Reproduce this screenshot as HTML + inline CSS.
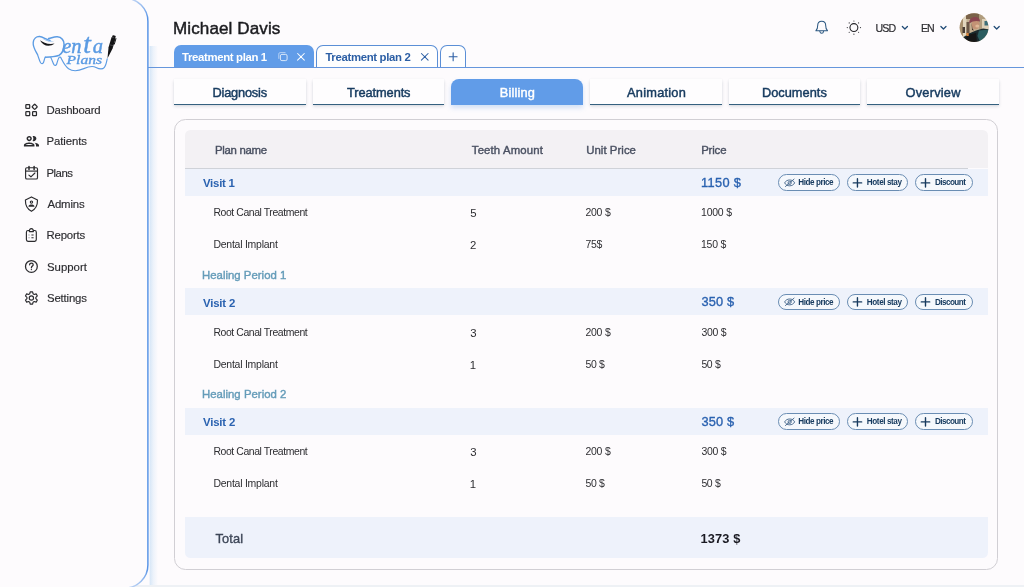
<!DOCTYPE html>
<html lang="en">
<head>
<meta charset="utf-8">
<title>Michael Davis – Billing</title>
<style>
*{box-sizing:border-box;margin:0;padding:0}
html,body{width:1024px;height:587px;overflow:hidden}
html{opacity:.999}
body{position:relative;background:#fdfbfd;font-family:"Liberation Sans",sans-serif;color:#333}
.t{position:absolute;white-space:nowrap;line-height:1;font-weight:400;display:block}
ul{list-style:none}
svg{position:absolute;overflow:visible}
.sidebar{position:absolute;left:0;top:-1px;width:148.6px;height:589px;background:#fdfbfd;border-radius:0 23px 23px 0;z-index:3}
.sideshadow{position:absolute;left:148.8px;top:45.5px;width:9.5px;height:545px;background:linear-gradient(to right,rgba(216,231,247,0) 0,rgba(216,231,247,.95) 14%,rgba(226,237,249,.6) 48%,rgba(240,244,252,0) 100%);z-index:1}
.bottomstrip{position:absolute;left:0;top:585.4px;width:1024px;height:2px;background:#eef1f5;z-index:2}
.header{position:absolute;left:0;top:0;width:1024px;height:45px}
.planline{position:absolute;left:148px;top:67.3px;width:876px;height:1px;background:#6696dc;z-index:3}
.ptab{position:absolute;top:45.4px;height:22.9px;border-radius:7px 7px 0 0;z-index:2}
.ptab.on{background:#619ce8}
.ptab.off{background:#fefefe;border:1px solid #5b8fd6;border-bottom:none}
.stab{position:absolute;top:79.3px;height:25.4px;width:131.8px;background:#fefdfe;border-bottom:1.3px solid #35607f;box-shadow:0 1.5px 3px rgba(40,60,90,.16),0 0 2px rgba(40,60,90,.06)}
.stab.on{background:#619ce8;border-bottom:none;border-radius:8px 8px 0 0;box-shadow:0 3px 5px rgba(94,153,228,.28)}
.card{position:absolute;left:174px;top:118.8px;width:824.3px;height:451px;border:1px solid #d1cfd4;border-radius:11.5px;background:#fdfbfd}
.thead{position:absolute;left:185px;top:130px;width:803px;height:38.3px;background:#f3f1f4;border-radius:5.5px 5.5px 0 0}
.theadline{position:absolute;left:185px;top:167.8px;width:783px;height:1px;background:#cfd2d8}
.vrow{position:absolute;left:185px;width:803px;height:27.3px;background:#eef2fb}
.total{position:absolute;left:185px;top:517.2px;width:803px;height:41.3px;background:#eef2fb;border-radius:0 0 5.5px 5.5px}
.pill{position:absolute;height:16.4px;border:1px solid #6a8db3;border-radius:9px;background:#f5f8fc}
</style>
</head>
<body>

<div class="sideshadow"></div>
<aside class="sidebar">
<svg style="left:0;top:0" width="150" height="589" viewBox="0 -1 150 589" fill="none"><defs><linearGradient id="sbg" gradientUnits="userSpaceOnUse" x1="0" y1="-2" x2="0" y2="589"><stop offset="0" stop-color="#5592e6" stop-opacity=".35"/><stop offset=".035" stop-color="#5592e6"/><stop offset=".965" stop-color="#5592e6"/><stop offset="1" stop-color="#5592e6" stop-opacity=".35"/></linearGradient></defs><path d="M124.900 -1.700 A23 23 0 0 1 147.900 21.300 V565 A23 23 0 0 1 124.900 588" stroke="url(#sbg)" stroke-width="1.450"/></svg>
<svg style="left:30px;top:33px;" width="90" height="44" viewBox="30 32 90 44" fill="none"><path d="M37.500 54.500 C35.600 51 32.800 47 33.200 42.600 C33.600 38.600 36.400 36.300 39.600 36.500 C43 36.700 46 39.600 50 40.300" stroke="#5b9be3" stroke-width="1.350" stroke-linecap="round"/><path d="M48.600 38.500 C51.200 38.300 53.600 36.600 57.300 36.800 C61.500 37 64.300 40.500 64.100 44.600 C63.800 49.600 62 53.400 59.300 55.200 C55.600 57.400 49.500 56.600 45.400 57.200" stroke="#5b9be3" stroke-width="1.550" stroke-linecap="round"/><path d="M37.500 54.500 C38.600 57.500 39.500 61 40.600 62.800 C41.400 64 42.900 64 43.500 62.500 C44.300 60.500 44.300 58.600 45.400 57.200 M50.800 57.400 C52.200 60 53.100 63.600 54.100 64.900 C54.900 65.800 56.100 65.600 56.600 64.200 C57.400 62 57.700 59.600 58.900 57.700 C59.500 56.800 60.400 56.800 61 57.900 C62.600 61 64.500 65.600 68.600 68.700 C73 71.800 78.800 70.800 83.800 68.600 C88.400 66.600 92.600 65.600 96 67.400 C99 69 102 70 104.200 67.600 C106.200 65.400 106.600 61.500 107.200 58.800" stroke="#5b9be3" stroke-width="1.150" stroke-linecap="round" stroke-linejoin="round"/><path d="M42.500 38.400 C45.500 39.600 49 41.600 55.300 40.800 C50 42.600 46 41 42.500 38.400Z" fill="#5b9be3" fill-opacity=".85"/><path d="M40 40.300 C43 42.600 48.500 45 54.600 43.600 C49.500 47.600 42.600 46 40 40.300Z" fill="#17171a"/><g transform="rotate(16.500 111 46.500)"><path d="M108.900 37.300 h4.200 v10.700 l-2.100 11 l-2.100 -11 z" fill="#141416"/><rect x="109.300" y="35" width="3.400" height="2.400" rx=".8" fill="#141416"/><path d="M113.500 37.200 v6.500" stroke="#141416" stroke-width=".9"/><path d="M108.900 45.200 h4.200" stroke="#6a6a70" stroke-width=".5"/></g><text x="62.600" y="52.800" font-family="'Liberation Serif',serif" font-style="italic" font-weight="400" font-size="20.500" fill="#5b9be3" stroke="#5b9be3" stroke-width=".45"><tspan x="62.300">e</tspan><tspan x="71.300">n</tspan><tspan x="83.200" font-size="27.500">t</tspan><tspan x="92.800">a</tspan></text><text x="66.600" y="64" font-family="'Liberation Serif',serif" font-style="italic" font-weight="400" font-size="12" fill="#5b9be3" stroke="#5b9be3" stroke-width=".35" textLength="35.500" lengthAdjust="spacingAndGlyphs">Plans</text></svg>
<nav><ul>
<li><svg style="left:22px;top:101px;" width="20" height="20" viewBox="22 100 20 20" fill="none"><rect x="25.85" y="104.6" width="3.85" height="3.85" rx=".6" stroke="#2b2b2e" stroke-width="1.25"/><rect x="25.85" y="111.65" width="3.85" height="3.85" rx=".6" stroke="#2b2b2e" stroke-width="1.25"/><rect x="32.6" y="111.65" width="3.85" height="3.85" rx=".6" stroke="#2b2b2e" stroke-width="1.25"/><rect x="32.75" y="104.85" width="3.85" height="3.85" rx=".6" transform="rotate(45 34.68 106.78)" stroke="#2b2b2e" stroke-width="1.25"/></svg><a class="t" style="left:46.59px;top:106.16px;font-size:11.38px;letter-spacing:-0.206px;color:#2c2c30;-webkit-text-stroke:0.15px #2c2c30;">Dashboard</a></li>
<li><svg style="left:22px;top:131px;" width="20" height="20" viewBox="22 130 20 20" fill="none"><g transform="translate(22.4 132.2) scale(.755)"><path d="M9 13.75c-2.34 0-7 1.17-7 3.5V19h14v-1.75c0-2.33-4.66-3.5-7-3.5zM4.34 17c.84-.58 2.87-1.25 4.66-1.25s3.82.67 4.66 1.25H4.34zM9 12c1.93 0 3.5-1.57 3.5-3.5S10.93 5 9 5 5.5 6.57 5.5 8.5 7.07 12 9 12zm0-5c.83 0 1.5.67 1.5 1.5S9.83 10 9 10s-1.500-.67-1.500-1.500S8.170 7 9 7zm7.040 6.810c1.160.84 1.960 1.960 1.960 3.440V19h4v-1.750c0-2.020-3.500-3.170-5.960-3.440zM15 12c1.930 0 3.500-1.570 3.500-3.500S16.930 5 15 5c-.540 0-1.040.130-1.500.350.630.890 1 1.980 1 3.150s-.370 2.260-1 3.150c.460.220.960.350 1.500.350z" fill="#2b2b2e"/></g></svg><a class="t" style="left:46.59px;top:137.41px;font-size:11.38px;letter-spacing:-0.106px;color:#2c2c30;-webkit-text-stroke:0.15px #2c2c30;">Patients</a></li>
<li><svg style="left:22px;top:164px;" width="20" height="20" viewBox="22 163 20 20" fill="none"><rect x="25.6" y="167.7" width="11.9" height="11.3" rx="1.3" stroke="#2b2b2e" stroke-width="1.15"/><path d="M25.6 171.1h11.9" stroke="#2b2b2e" stroke-width="1.15"/><path d="M29 166.4v3M34.1 166.4v3" stroke="#2b2b2e" stroke-width="1.5" stroke-linecap="round"/><path d="M28.9 175.1l2 1.7 4-3.8" stroke="#2b2b2e" stroke-width="1.15" stroke-linecap="round" stroke-linejoin="round"/></svg><a class="t" style="left:46.59px;top:168.81px;font-size:11.38px;letter-spacing:-0.541px;color:#2c2c30;-webkit-text-stroke:0.15px #2c2c30;">Plans</a></li>
<li><svg style="left:22px;top:195px;" width="20" height="20" viewBox="22 194 20 20" fill="none"><path d="M31.45 196.9 L37.5 200.1 C37.6 205.6 35.6 209.2 31.45 211.3 C27.3 209.2 25.3 205.6 25.4 200.1 Z" stroke="#2b2b2e" stroke-width="1.15" stroke-linejoin="round"/><circle cx="31.45" cy="202.1" r="1.15" stroke="#2b2b2e" stroke-width="1.15"/><path d="M28.4 206.7 C28.6 204.9 30 204.6 31.45 204.6 C32.9 204.6 34.3 204.9 34.500 206.700 Z" fill="#2b2b2e"/></svg><a class="t" style="left:47.50px;top:200.01px;font-size:11.38px;letter-spacing:-0.148px;color:#2c2c30;-webkit-text-stroke:0.15px #2c2c30;">Admins</a></li>
<li><svg style="left:22px;top:226px;" width="20" height="20" viewBox="22 225 20 20" fill="none"><path d="M29.4 230.5 H28 C27 230.5 26.4 231.200 26.4 232.200 V239.600 C26.4 240.600 27 241.300 28 241.300 H34.700 C35.700 241.300 36.300 240.600 36.300 239.600 V232.200 C36.300 231.200 35.700 230.500 34.700 230.500 H33.300" stroke="#2b2b2e" stroke-width="1.15"/><path d="M29.3 231.600 C29.300 229.600 30.200 228.600 31.350 228.600 C32.500 228.600 33.400 229.600 33.400 231.600 Z" stroke="#2b2b2e" stroke-width="1.15" stroke-linejoin="round"/><path d="M28.500 235h1.1M28.500 237.700h1.100" stroke="#8a8a8e" stroke-width="1.100"/><path d="M31.400 235h2.200M31.400 237.700h2.200" stroke="#2b2b2e" stroke-width="1.100"/></svg><a class="t" style="left:46.59px;top:231.41px;font-size:11.38px;letter-spacing:-0.209px;color:#2c2c30;-webkit-text-stroke:0.15px #2c2c30;">Reports</a></li>
<li><svg style="left:22px;top:258px;" width="20" height="20" viewBox="22 257 20 20" fill="none"><circle cx="31.400" cy="266.450" r="5.900" stroke="#2b2b2e" stroke-width="1.25"/><path d="M29.600 264.800 C29.600 263.600 30.400 263 31.400 263 C32.400 263 33.200 263.700 33.200 264.700 C33.200 266 31.400 266.200 31.400 267.800" stroke="#2b2b2e" stroke-width="1.25" stroke-linecap="round"/><circle cx="31.400" cy="269.600" r=".7" fill="#2b2b2e"/></svg><a class="t" style="left:46.99px;top:262.66px;font-size:11.38px;letter-spacing:0.009px;color:#2c2c30;-webkit-text-stroke:0.15px #2c2c30;">Support</a></li>
<li><svg style="left:22px;top:289px;" width="20" height="20" viewBox="22 288 20 20" fill="none"><path d="M30.20 291.82 L32.60 291.82 L33.09 293.83 L34.17 294.45 L36.15 293.87 L37.36 295.95 L35.86 297.37 L35.86 298.63 L37.36 300.05 L36.15 302.13 L34.17 301.55 L33.09 302.17 L32.60 304.18 L30.20 304.18 L29.71 302.17 L28.63 301.55 L26.65 302.13 L25.44 300.05 L26.94 298.63 L26.94 297.37 L25.44 295.95 L26.65 293.87 L28.63 294.45 L29.71 293.83Z" stroke="#2b2b2e" stroke-width="1.150" stroke-linejoin="round"/><circle cx="31.4" cy="298.0" r="2.150" stroke="#2b2b2e" stroke-width="1.150"/></svg><a class="t" style="left:46.99px;top:293.91px;font-size:11.38px;letter-spacing:-0.171px;color:#2c2c30;-webkit-text-stroke:0.15px #2c2c30;">Settings</a></li>
</ul></nav>
</aside>
<header class="header">
<h1 class="t" style="left:173.03px;top:19.86px;font-size:17.07px;letter-spacing:0.092px;color:#1b1b1f;-webkit-text-stroke:0.45px #1b1b1f;">Michael Davis</h1>
<svg style="left:808px;top:10px;" width="200" height="36" viewBox="808 10 200 36" fill="none"><path d="M815.900 30.700 C817.500 29.500 817.700 27.600 817.700 25.500 C817.700 22.900 819.400 21.200 821.700 21.200 C824 21.200 825.700 22.900 825.700 25.500 C825.700 27.600 825.900 29.500 827.500 30.700 Z" stroke="#2b5781" stroke-width="1.050" stroke-linejoin="round"/><path d="M819.800 31.200 C820 32.600 820.800 33.300 821.700 33.300 C822.600 33.300 823.400 32.600 823.600 31.200" stroke="#2b5781" stroke-width="1.050" stroke-linecap="round"/><circle cx="853.9" cy="27.6" r="3.950" stroke="#222226" stroke-width="1.100"/><circle cx="860.50" cy="27.60" r=".6" fill="#333338"/><circle cx="858.57" cy="32.27" r=".6" fill="#333338"/><circle cx="853.90" cy="34.20" r=".6" fill="#333338"/><circle cx="849.23" cy="32.27" r=".6" fill="#333338"/><circle cx="847.30" cy="27.60" r=".6" fill="#333338"/><circle cx="849.23" cy="22.93" r=".6" fill="#333338"/><circle cx="853.90" cy="21.00" r=".6" fill="#333338"/><circle cx="858.57" cy="22.93" r=".6" fill="#333338"/><path d="M902.35 26.500 L904.9 29 L907.4499999999999 26.500" stroke="#1f4a75" stroke-width="1.250" stroke-linecap="round" stroke-linejoin="round"/><path d="M940.9000000000001 26.500 L943.45 29 L946.0 26.500" stroke="#1f4a75" stroke-width="1.250" stroke-linecap="round" stroke-linejoin="round"/><path d="M994.1500000000001 26.500 L996.7 29 L999.25 26.500" stroke="#1f4a75" stroke-width="1.250" stroke-linecap="round" stroke-linejoin="round"/><defs><clipPath id="av"><circle cx="974.1" cy="27.600" r="14.400"/></clipPath><filter id="bl" x="-20%" y="-20%" width="140%" height="140%"><feGaussianBlur stdDeviation=".75"/></filter></defs>
<g clip-path="url(#av)"><rect x="958" y="12" width="33" height="32" fill="#c2ae90"/><g filter="url(#bl)">
<rect x="958" y="12" width="6" height="32" fill="#a8906e"/><rect x="963" y="15" width="3.500" height="22" fill="#e2d6be"/><rect x="962.500" y="27" width="2.500" height="6" fill="#4a3c34"/><rect x="966.500" y="22" width="3" height="12" fill="#6a5646"/>
<rect x="966" y="12" width="16" height="7" fill="#7a6248"/><rect x="979" y="14" width="10" height="18" fill="#b09c7e"/><rect x="982" y="19" width="7" height="13" fill="#ddd0b8"/><rect x="984.500" y="21" width="4" height="4.500" fill="#3d6e78"/>
<path d="M958 44 L962 38 L969 33.500 L976 30.500 L983 28.500 L990 29.500 L990 44 Z" fill="#1a2a2e"/><path d="M979 30.500 L989 29.500 L990 41 L981 44 L977.500 36Z" fill="#2b5c5e"/><path d="M960 44 L968 35 L976 33 L977 44Z" fill="#141517"/>
<ellipse cx="975.600" cy="24.600" rx="3.900" ry="4.700" fill="#c39274"/><path d="M969.300 23.500 C968.800 18.600 972.500 16.400 976 17 C979 17.600 980.300 19.800 979.900 21.600 C976.500 20.400 972.800 21 969.300 23.500Z" fill="#8a4450"/><ellipse cx="977.300" cy="26" rx="2" ry="1.600" fill="#e0b898"/><path d="M971.500 22.500 L972.500 28.500 L974 30.500 L972 30 Z" fill="#4a3228"/>
<rect x="966.300" y="33" width="2.400" height="3" fill="#d8843c"/></g></g></svg>
<span class="t" style="left:875.60px;top:22.70px;font-size:10.61px;letter-spacing:-0.886px;color:#2e2e32;-webkit-text-stroke:0.2px #2e2e32;">USD</span>
<span class="t" style="left:921.05px;top:22.70px;font-size:10.61px;letter-spacing:-1.231px;color:#2e2e32;-webkit-text-stroke:0.2px #2e2e32;">EN</span>
</header>
<div class="planline"></div>
<div class="ptab on" style="left:173.6px;width:140.2px"></div>
<span class="t" style="left:182.09px;top:52.11px;font-size:11.38px;letter-spacing:-0.353px;color:#fff;font-weight:700;z-index:3;">Treatment plan 1</span>
<div class="ptab off" style="left:316px;width:121.8px"></div>
<span class="t" style="left:325.39px;top:52.11px;font-size:11.38px;letter-spacing:-0.330px;color:#2c5fa5;font-weight:700;z-index:3;">Treatment plan 2</span>
<div class="ptab off" style="left:440.2px;width:25.8px"></div>
<svg style="left:270px;top:46px;z-index:4;" width="200" height="20" viewBox="270 46 200 20" fill="none"><rect x="280.400" y="54.400" width="6.700" height="6.200" rx="1.500" stroke="#fff" stroke-opacity=".85" stroke-width=".9"/><path d="M285.500 52.600 H280.300 C279.300 52.600 278.800 53.200 278.800 54.200 V58.800" stroke="#fff" stroke-opacity=".6" stroke-width=".9"/><path d="M297.600 53.500 L304.300 60.200 M304.300 53.500 L297.600 60.200" stroke="#fff" stroke-width="1.050" stroke-linecap="round"/><path d="M421.400 53.500 L428.100 60.200 M428.100 53.500 L421.400 60.200" stroke="#2c5fa5" stroke-width="1.050" stroke-linecap="round"/><path d="M449.200 56.800 H457.100 M453.150 52.850 V60.750" stroke="#2c5fa5" stroke-width="1.100" stroke-linecap="round"/></svg>
<div class="stab" style="left:174.00px"></div>
<span class="t" style="left:212.48px;top:86.60px;font-size:12.8px;letter-spacing:-0.192px;color:#183c60;-webkit-text-stroke:0.45px #183c60;z-index:3;">Diagnosis</span>
<div class="stab" style="left:312.64px"></div>
<span class="t" style="left:347.12px;top:86.60px;font-size:12.8px;letter-spacing:-0.092px;color:#183c60;-webkit-text-stroke:0.45px #183c60;z-index:3;">Treatments</span>
<div class="stab on" style="left:451.28px"></div>
<span class="t" style="left:499.68px;top:86.60px;font-size:12.8px;letter-spacing:0.171px;color:#fff;-webkit-text-stroke:0.45px #fff;z-index:3;">Billing</span>
<div class="stab" style="left:589.92px"></div>
<span class="t" style="left:627.09px;top:86.60px;font-size:12.8px;letter-spacing:0.224px;color:#183c60;-webkit-text-stroke:0.45px #183c60;z-index:3;">Animation</span>
<div class="stab" style="left:728.56px"></div>
<span class="t" style="left:761.89px;top:86.60px;font-size:12.8px;letter-spacing:0.024px;color:#183c60;-webkit-text-stroke:0.45px #183c60;z-index:3;">Documents</span>
<div class="stab" style="left:867.20px"></div>
<span class="t" style="left:905.56px;top:86.60px;font-size:12.8px;letter-spacing:0.219px;color:#183c60;-webkit-text-stroke:0.45px #183c60;z-index:3;">Overview</span>
<main class="card"></main>
<div class="thead"></div><div class="theadline"></div>
<span class="t" style="left:214.89px;top:145.41px;font-size:11.38px;letter-spacing:-0.270px;color:#4a5162;-webkit-text-stroke:0.4px #4a5162;">Plan name</span>
<span class="t" style="left:471.82px;top:145.41px;font-size:11.38px;letter-spacing:0.129px;color:#4a5162;-webkit-text-stroke:0.4px #4a5162;">Teeth Amount</span>
<span class="t" style="left:586.20px;top:145.41px;font-size:11.38px;letter-spacing:0.051px;color:#4a5162;-webkit-text-stroke:0.4px #4a5162;">Unit Price</span>
<span class="t" style="left:701.14px;top:145.41px;font-size:11.38px;letter-spacing:-0.142px;color:#4a5162;-webkit-text-stroke:0.4px #4a5162;">Price</span>
<div class="vrow" style="top:168.5px"></div>
<span class="t" style="left:202.94px;top:178.21px;font-size:11.38px;letter-spacing:-0.218px;color:#2a62b0;font-weight:700;">Visit 1</span>
<span class="t" style="left:701.04px;top:176.50px;font-size:12.8px;letter-spacing:0.346px;color:#2a62b0;-webkit-text-stroke:0.35px #2a62b0;">1150 $</span>
<div class="pill" style="left:777.5px;top:174.3px;width:62.5px"></div>
<span class="t" style="left:798.37px;top:179.03px;font-size:8.14px;letter-spacing:-0.451px;color:#183c60;font-weight:700;z-index:3;">Hide price</span>
<svg style="left:782.5px;top:176.5px;z-index:4;" width="14" height="12" viewBox="782.5 176.5 14 12" fill="none"><path d="M784.15 182.4 C785.9499999999999 178.5 792.35 178.5 794.15 182.4 C792.35 186.3 785.9499999999999 186.3 784.15 182.4Z" stroke="#3f6288" stroke-width=".9"/><circle cx="789.15" cy="182.4" r="1.600" stroke="#3f6288" stroke-width=".9"/><path d="M784.9499999999999 186.0 L793.55 178.6" stroke="#3f6288" stroke-width=".9" stroke-linecap="round"/></svg>
<div class="pill" style="left:846.75px;top:174.3px;width:61.6px"></div>
<span class="t" style="left:866.87px;top:179.03px;font-size:8.14px;letter-spacing:-0.415px;color:#183c60;font-weight:700;z-index:3;">Hotel stay</span>
<svg style="left:850.75px;top:176.5px;z-index:4;" width="14" height="12" viewBox="850.75 176.5 14 12" fill="none"><path d="M853.0 182.4 H861.4000000000001 M857.2 178.20000000000002 V186.6" stroke="#173a5e" stroke-width="1.400" stroke-linecap="round"/></svg>
<div class="pill" style="left:915px;top:174.3px;width:57.5px"></div>
<span class="t" style="left:935.07px;top:179.03px;font-size:8.14px;letter-spacing:-0.566px;color:#183c60;font-weight:700;z-index:3;">Discount</span>
<svg style="left:919.0px;top:176.5px;z-index:4;" width="14" height="12" viewBox="919.0 176.5 14 12" fill="none"><path d="M921.3 182.4 H929.7 M925.5 178.20000000000002 V186.6" stroke="#173a5e" stroke-width="1.400" stroke-linecap="round"/></svg>
<span class="t" style="left:213.41px;top:208.02px;font-size:10.46px;letter-spacing:-0.420px;color:#2e2e32;">Root Canal Treatment</span>
<span class="t" style="left:470.14px;top:208.06px;font-size:11.38px;letter-spacing:0.000px;color:#2e2e32;">5</span>
<span class="t" style="left:585.38px;top:208.02px;font-size:10.46px;letter-spacing:-0.205px;color:#2e2e32;">200 $</span>
<span class="t" style="left:701.02px;top:208.02px;font-size:10.46px;letter-spacing:-0.197px;color:#2e2e32;">1000 $</span>
<span class="t" style="left:213.41px;top:240.02px;font-size:10.46px;letter-spacing:-0.229px;color:#2e2e32;">Dental Implant</span>
<span class="t" style="left:470.03px;top:240.06px;font-size:11.38px;letter-spacing:0.000px;color:#2e2e32;">2</span>
<span class="t" style="left:585.38px;top:240.02px;font-size:10.46px;letter-spacing:-0.251px;color:#2e2e32;">75$</span>
<span class="t" style="left:701.02px;top:240.02px;font-size:10.46px;letter-spacing:-0.227px;color:#2e2e32;">150 $</span>
<span class="t" style="left:201.99px;top:269.81px;font-size:11.38px;letter-spacing:0.018px;color:#659cb9;-webkit-text-stroke:0.4px #659cb9;">Healing Period 1</span>
<div class="vrow" style="top:288.0px"></div>
<span class="t" style="left:202.94px;top:297.71px;font-size:11.38px;letter-spacing:-0.161px;color:#2a62b0;font-weight:700;">Visit 2</span>
<span class="t" style="left:701.49px;top:296.00px;font-size:12.8px;letter-spacing:0.128px;color:#2a62b0;-webkit-text-stroke:0.35px #2a62b0;">350 $</span>
<div class="pill" style="left:777.5px;top:293.8px;width:62.5px"></div>
<span class="t" style="left:798.37px;top:298.53px;font-size:8.14px;letter-spacing:-0.451px;color:#183c60;font-weight:700;z-index:3;">Hide price</span>
<svg style="left:782.5px;top:296.0px;z-index:4;" width="14" height="12" viewBox="782.5 296.0 14 12" fill="none"><path d="M784.15 301.9 C785.9499999999999 298.0 792.35 298.0 794.15 301.9 C792.35 305.79999999999995 785.9499999999999 305.79999999999995 784.15 301.9Z" stroke="#3f6288" stroke-width=".9"/><circle cx="789.15" cy="301.9" r="1.600" stroke="#3f6288" stroke-width=".9"/><path d="M784.9499999999999 305.5 L793.55 298.09999999999997" stroke="#3f6288" stroke-width=".9" stroke-linecap="round"/></svg>
<div class="pill" style="left:846.75px;top:293.8px;width:61.6px"></div>
<span class="t" style="left:866.87px;top:298.53px;font-size:8.14px;letter-spacing:-0.415px;color:#183c60;font-weight:700;z-index:3;">Hotel stay</span>
<svg style="left:850.75px;top:296.0px;z-index:4;" width="14" height="12" viewBox="850.75 296.0 14 12" fill="none"><path d="M853.0 301.9 H861.4000000000001 M857.2 297.7 V306.09999999999997" stroke="#173a5e" stroke-width="1.400" stroke-linecap="round"/></svg>
<div class="pill" style="left:915px;top:293.8px;width:57.5px"></div>
<span class="t" style="left:935.07px;top:298.53px;font-size:8.14px;letter-spacing:-0.566px;color:#183c60;font-weight:700;z-index:3;">Discount</span>
<svg style="left:919.0px;top:296.0px;z-index:4;" width="14" height="12" viewBox="919.0 296.0 14 12" fill="none"><path d="M921.3 301.9 H929.7 M925.5 297.7 V306.09999999999997" stroke="#173a5e" stroke-width="1.400" stroke-linecap="round"/></svg>
<span class="t" style="left:213.41px;top:327.52px;font-size:10.46px;letter-spacing:-0.420px;color:#2e2e32;">Root Canal Treatment</span>
<span class="t" style="left:470.14px;top:327.56px;font-size:11.38px;letter-spacing:0.000px;color:#2e2e32;">3</span>
<span class="t" style="left:585.38px;top:327.52px;font-size:10.46px;letter-spacing:-0.205px;color:#2e2e32;">200 $</span>
<span class="t" style="left:701.38px;top:327.52px;font-size:10.46px;letter-spacing:-0.231px;color:#2e2e32;">300 $</span>
<span class="t" style="left:213.41px;top:359.52px;font-size:10.46px;letter-spacing:-0.229px;color:#2e2e32;">Dental Implant</span>
<span class="t" style="left:469.75px;top:359.56px;font-size:11.38px;letter-spacing:0.000px;color:#2e2e32;">1</span>
<span class="t" style="left:585.48px;top:359.52px;font-size:10.46px;letter-spacing:-0.332px;color:#2e2e32;">50 $</span>
<span class="t" style="left:701.38px;top:359.52px;font-size:10.46px;letter-spacing:-0.332px;color:#2e2e32;">50 $</span>
<span class="t" style="left:201.99px;top:389.31px;font-size:11.38px;letter-spacing:0.022px;color:#659cb9;-webkit-text-stroke:0.4px #659cb9;">Healing Period 2</span>
<div class="vrow" style="top:407.5px"></div>
<span class="t" style="left:202.94px;top:417.21px;font-size:11.38px;letter-spacing:-0.161px;color:#2a62b0;font-weight:700;">Visit 2</span>
<span class="t" style="left:701.49px;top:415.50px;font-size:12.8px;letter-spacing:0.128px;color:#2a62b0;-webkit-text-stroke:0.35px #2a62b0;">350 $</span>
<div class="pill" style="left:777.5px;top:413.3px;width:62.5px"></div>
<span class="t" style="left:798.37px;top:418.03px;font-size:8.14px;letter-spacing:-0.451px;color:#183c60;font-weight:700;z-index:3;">Hide price</span>
<svg style="left:782.5px;top:415.5px;z-index:4;" width="14" height="12" viewBox="782.5 415.5 14 12" fill="none"><path d="M784.15 421.4 C785.9499999999999 417.5 792.35 417.5 794.15 421.4 C792.35 425.29999999999995 785.9499999999999 425.29999999999995 784.15 421.4Z" stroke="#3f6288" stroke-width=".9"/><circle cx="789.15" cy="421.4" r="1.600" stroke="#3f6288" stroke-width=".9"/><path d="M784.9499999999999 425.0 L793.55 417.59999999999997" stroke="#3f6288" stroke-width=".9" stroke-linecap="round"/></svg>
<div class="pill" style="left:846.75px;top:413.3px;width:61.6px"></div>
<span class="t" style="left:866.87px;top:418.03px;font-size:8.14px;letter-spacing:-0.415px;color:#183c60;font-weight:700;z-index:3;">Hotel stay</span>
<svg style="left:850.75px;top:415.5px;z-index:4;" width="14" height="12" viewBox="850.75 415.5 14 12" fill="none"><path d="M853.0 421.4 H861.4000000000001 M857.2 417.2 V425.59999999999997" stroke="#173a5e" stroke-width="1.400" stroke-linecap="round"/></svg>
<div class="pill" style="left:915px;top:413.3px;width:57.5px"></div>
<span class="t" style="left:935.07px;top:418.03px;font-size:8.14px;letter-spacing:-0.566px;color:#183c60;font-weight:700;z-index:3;">Discount</span>
<svg style="left:919.0px;top:415.5px;z-index:4;" width="14" height="12" viewBox="919.0 415.5 14 12" fill="none"><path d="M921.3 421.4 H929.7 M925.5 417.2 V425.59999999999997" stroke="#173a5e" stroke-width="1.400" stroke-linecap="round"/></svg>
<span class="t" style="left:213.41px;top:447.02px;font-size:10.46px;letter-spacing:-0.420px;color:#2e2e32;">Root Canal Treatment</span>
<span class="t" style="left:470.14px;top:447.06px;font-size:11.38px;letter-spacing:0.000px;color:#2e2e32;">3</span>
<span class="t" style="left:585.38px;top:447.02px;font-size:10.46px;letter-spacing:-0.205px;color:#2e2e32;">200 $</span>
<span class="t" style="left:701.38px;top:447.02px;font-size:10.46px;letter-spacing:-0.231px;color:#2e2e32;">300 $</span>
<span class="t" style="left:213.41px;top:479.02px;font-size:10.46px;letter-spacing:-0.229px;color:#2e2e32;">Dental Implant</span>
<span class="t" style="left:469.75px;top:479.06px;font-size:11.38px;letter-spacing:0.000px;color:#2e2e32;">1</span>
<span class="t" style="left:585.48px;top:479.02px;font-size:10.46px;letter-spacing:-0.332px;color:#2e2e32;">50 $</span>
<span class="t" style="left:701.38px;top:479.02px;font-size:10.46px;letter-spacing:-0.332px;color:#2e2e32;">50 $</span>
<div class="total"></div>
<span class="t" style="left:215.49px;top:532.60px;font-size:12.8px;letter-spacing:0.128px;color:#3d4657;-webkit-text-stroke:0.35px #3d4657;">Total</span>
<span class="t" style="left:700.53px;top:532.60px;font-size:12.8px;letter-spacing:0.128px;color:#1a1a22;font-weight:700;">1373 $</span>
<div class="bottomstrip"></div>
</body>
</html>
